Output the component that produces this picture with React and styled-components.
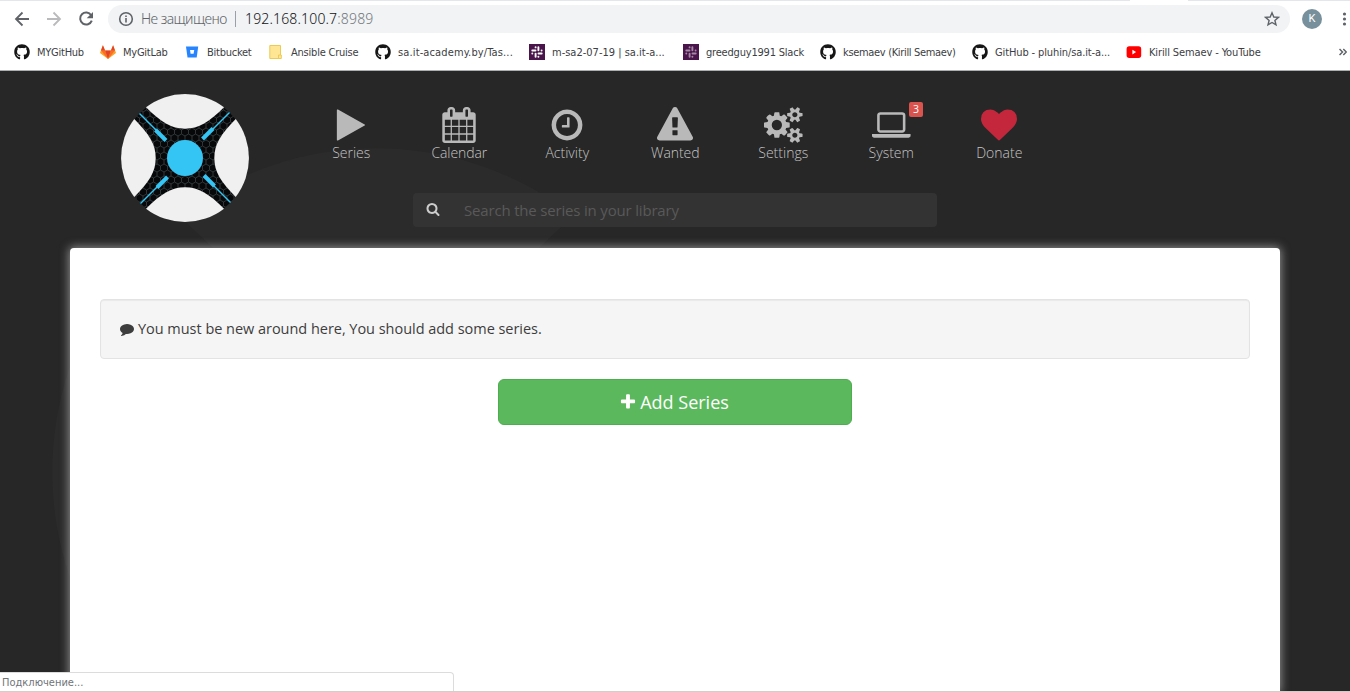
import React from "react";
import styled, { createGlobalStyle } from "styled-components";
import { FaGithub } from "react-icons/fa";

const Global = createGlobalStyle`
  * { box-sizing: border-box; }
  html, body { margin: 0; height: 100%; overflow: hidden; background: #272727; }
  #root { height: 100%; }
`;

const uiFont = `"DejaVu Sans Condensed", "DejaVu Sans", sans-serif`;
const siteFont = `"Open Sans", "Noto Sans", sans-serif`;

const Window = styled.div`
  display: flex;
  flex-direction: column;
  width: 1350px;
  height: 692px;
  overflow: hidden;
  position: relative;
`;

/* ---------- browser chrome ---------- */

const Chrome = styled.header`
  flex: none;
  height: 71px;
  background: #fff;
  border-bottom: 1px solid #abafb0;
  font-family: ${uiFont};
`;

const TabEdge = styled.div`
  height: 1px;
  background: linear-gradient(90deg, #e3e7eb 1130px, #fff 1130px, #fff 1188px, #e3e7eb 1188px);
`;

const Toolbar = styled.div`
  display: flex;
  align-items: center;
  height: 36px;
  padding-left: 12px;
`;

const ToolButton = styled.span`
  display: flex;
  align-items: center;
  justify-content: center;
  flex: none;
  width: 20px;
  height: 20px;
  margin-right: 12px;
  color: ${(p) => (p.$muted ? "#bababc" : "#5f6368")};
`;

const Omnibox = styled.div`
  display: flex;
  align-items: center;
  width: 1182px;
  height: 28px;
  padding: 0 10px;
  border-radius: 14px;
  background: #f1f3f4;
  color: #5f6368;
`;

const Security = styled.span`
  margin-left: 7px;
  width: 87px;
  font: 300 14px/20px "Noto Sans", sans-serif;
  letter-spacing: -0.55px;
  white-space: nowrap;
`;

const Divider = styled.i`
  width: 1px;
  height: 16px;
  margin: 0 9px 0 7px;
  background: #9aa0a6;
`;

const Address = styled.span`
  flex: 1;
  font: 300 14px/20px "Noto Sans", sans-serif;
  color: #101114;
  white-space: nowrap;
  letter-spacing: 0.16px;
`;

const Port = styled.span`
  color: #72777d;
`;

const Avatar = styled.span`
  display: flex;
  align-items: center;
  justify-content: center;
  width: 20px;
  height: 20px;
  margin: 0 20px 0 12px;
  border-radius: 50%;
  background: #78909c;
  color: #fff;
  font: 11px/20px Roboto, sans-serif;
`;

const Bookmarks = styled.nav`
  display: flex;
  align-items: center;
  height: 30px;
  padding-left: 14px;
  color: #3c4043;
`;

const Bookmark = styled.span`
  display: flex;
  align-items: center;
  flex: none;
  gap: 7px;
  width: ${(p) => p.$width}px;
  font-size: 11px;
  line-height: 16px;
  white-space: nowrap;
  letter-spacing: ${(p) => p.$track || 0}px;
  svg { flex: none; }
`;

const BookmarkText = styled.span`
  padding-top: 1px;
`;

const More = styled.span`
  display: flex;
  margin-left: auto;
  margin-right: 3px;
`;

/* ---------- page ---------- */

const Page = styled.main`
  position: relative;
  flex: 1;
  min-height: 0;
  overflow: hidden;
  background: #272727;
  font-family: ${siteFont};
`;

const Watermark = styled.svg`
  position: absolute;
  left: 52px;
  top: 77px;
`;

const Container = styled.div`
  position: relative;
  display: flex;
  flex-direction: column;
  width: 1210px;
  height: 100%;
  margin: 0 auto;
`;

const Header = styled.div`
  display: flex;
  flex: none;
  height: 177px;
  padding: 23px 0 0 51px;
`;

const HeaderBody = styled.div`
  margin-left: 48px;
`;

const Menu = styled.nav`
  display: flex;
  height: 99px;
  padding-top: 12px;
`;

const MenuItem = styled.a`
  position: relative;
  display: flex;
  flex-direction: column;
  align-items: center;
  width: 108px;
  padding: 0.5px 0 0 0.5px;
  color: ${(p) => (p.$heart ? "#c4273c" : "#b9b9b9")};
`;

const MenuLabel = styled.span`
  margin-top: 0.5px;
  font-size: 14px;
  line-height: 20px;
  font-weight: 300;
  color: #c4c4c4;
  letter-spacing: ${(p) => p.$track || 0}px;
`;

const Badge = styled.span`
  position: absolute;
  left: 72px;
  top: -4px;
  width: 14px;
  height: 15px;
  border-radius: 2px;
  background: #d9534f;
  color: #fff;
  font-size: 10.5px;
  line-height: 15px;
  text-align: center;
`;

const Search = styled.div`
  display: flex;
  align-items: center;
  width: 524px;
  height: 34px;
  margin-left: 116px;
  padding-left: 12.5px;
  border-radius: 4px;
  background: #333;
  color: #ccc;
  > svg { margin-bottom: 2px; }
`;

const Placeholder = styled.span`
  margin-left: 24.5px;
  font-size: 15px;
  line-height: 20px;
  letter-spacing: -0.18px;
  color: #595959;
`;

const Panel = styled.section`
  flex: 1;
  padding: 51px 30px 0;
  border-radius: 4px 4px 0 0;
  background: #fff;
  box-shadow: 0 0 10px 1px rgba(245, 242, 243, 0.52);
`;

const Well = styled.div`
  display: flex;
  align-items: center;
  height: 60px;
  padding: 0 19px 1px;
  border: 1px solid #e3e3e3;
  border-radius: 4px;
  background: #f5f5f5;
  box-shadow: inset 0 1px 1px rgba(0, 0, 0, 0.05);
  color: #3d3d3d;
  font-size: 14.5px;
  line-height: 20px;
`;

const WellText = styled.span`
  margin-left: 4px;
  letter-spacing: -0.03px;
`;

const AddButton = styled.button`
  display: flex;
  align-items: center;
  justify-content: center;
  gap: 3px;
  width: 354px;
  height: 46px;
  margin: 20px auto 0;
  padding: 0 2px 0 0;
  border: 1px solid #4cae4c;
  border-radius: 6px;
  background: #5cb85c;
  color: #fff;
  font: 18px/24px ${siteFont};
`;

const Status = styled.div`
  position: absolute;
  left: 0;
  bottom: 1px;
  width: 454px;
  height: 19px;
  padding-left: 2px;
  border: solid #dcdcdc;
  border-width: 1px 1px 0 0;
  border-radius: 0 4px 0 0;
  background: #fff;
  color: #70757a;
  font: 11px/19px ${uiFont};
`;

const BottomEdge = styled.div`
  position: absolute;
  left: 0;
  right: 0;
  bottom: 0;
  height: 1px;
  background: #cfd0c8;
`;

/* ---------- drawings ---------- */

const glyphs = {
  play: "M1576 927l-1328 738q-23 13-39.5 3t-16.5-36v-1472q0-26 16.5-36t39.5 3l1328 738q23 13 23 31t-23 31z",
  calendar:
    "M192 1664h288v-288h-288v288zm352 0h320v-288h-320v288zm-352-352h288v-320h-288v320zm352 0h320v-320h-320v320zm-352-384h288v-288h-288v288zm736 736h320v-288h-320v288zm-384-736h320v-288h-320v288zm768 736h288v-288h-288v288zm-384-352h320v-320h-320v320zm-352-864v-288q0-13-9.5-22.5t-22.5-9.5h-64q-13 0-22.5 9.5t-9.5 22.5v288q0 13 9.5 22.5t22.5 9.5h64q13 0 22.5-9.5t9.5-22.5zm736 864h288v-320h-288v320zm-384-384h320v-288h-320v288zm384 0h288v-288h-288v288zm32-480v-288q0-13-9.5-22.5t-22.5-9.5h-64q-13 0-22.5 9.5t-9.5 22.5v288q0 13 9.5 22.5t22.5 9.5h64q13 0 22.5-9.5t9.5-22.5zm384-64v1280q0 52-38 90t-90 38h-1408q-52 0-90-38t-38-90v-1280q0-52 38-90t90-38h128v-96q0-66 47-113t113-47h64q66 0 113 47t47 113v96h384v-96q0-66 47-113t113-47h64q66 0 113 47t47 113v96h128q52 0 90 38t38 90z",
  clock:
    "M1024 544v448q0 14-9 23t-23 9h-320q-14 0-23-9t-9-23v-64q0-14 9-23t23-9h224v-352q0-14 9-23t23-9h64q14 0 23 9t9 23zm416 352q0-148-73-273t-198-198-273-73-273 73-198 198-73 273 73 273 198 198 273 73 273-73 198-198 73-273zm224 0q0 209-103 385.5t-279.5 279.5-385.5 103-385.5-103-279.5-279.5-103-385.5 103-385.5 279.5-279.5 385.5-103 385.5 103 279.5 279.5 103 385.5z",
  warning:
    "M1024 1375v-190q0-14-9.5-23.5t-22.5-9.5h-192q-13 0-22.5 9.5t-9.5 23.5v190q0 14 9.5 23.5t22.5 9.5h192q13 0 22.5-9.5t9.5-23.5zm-2-374l18-459q0-12-10-19-13-11-24-11h-220q-11 0-24 11-10 7-10 21l17 457q0 10 10 16.5t24 6.5h185q14 0 23.5-6.5t10.5-16.5zm-14-934l768 1408q35 63-2 126-17 29-46.5 46t-63.5 17h-1536q-34 0-63.5-17t-46.5-46q-37-63-2-126l768-1408q17-31 47-49t65-18 65 18 47 49z",
  cogs:
    "M896 896q0-106-75-181t-181-75-181 75-75 181 75 181 181 75 181-75 75-181zm768 512q0-52-38-90t-90-38-90 38-38 90q0 53 37.5 90.5t90.5 37.5 90.5-37.5 37.5-90.5zm0-1024q0-52-38-90t-90-38-90 38-38 90q0 53 37.5 90.5t90.5 37.5 90.5-37.5 37.5-90.5zm-384 421v185q0 10-7 19.5t-16 10.5l-155 24q-11 35-32 76 34 48 90 115 7 11 7 20 0 12-7 19-23 30-82.5 89.5t-78.5 59.5q-11 0-21-7l-115-90q-37 19-77 31-11 108-23 155-7 24-30 24h-186q-11 0-20-7.5t-10-17.5l-23-153q-34-10-75-31l-118 89q-7 7-20 7-11 0-21-8-144-133-144-160 0-9 7-19 10-14 41-53t47-61q-23-44-35-82l-152-24q-10-1-17-9.5t-7-19.5v-185q0-10 7-19.5t16-10.5l155-24q11-35 32-76-34-48-90-115-7-11-7-20 0-12 7-20 22-30 82-89t79-59q11 0 21 7l115 90q34-18 77-32 11-108 23-154 7-24 30-24h186q11 0 20 7.5t10 17.5l23 153q34 10 75 31l118-89q8-7 20-7 11 0 21 8 144 133 144 160 0 8-7 19-12 16-42 54t-45 60q23 48 34 82l152 23q10 2 17 10.5t7 19.5zm640 533v140q0 16-149 31-12 27-30 52 51 113 51 138 0 4-4 7-122 71-124 71-8 0-46-47t-52-68q-20 2-30 2t-30-2q-14 21-52 68t-46 47q-2 0-124-71-4-3-4-7 0-25 51-138-18-25-30-52-149-15-149-31v-140q0-16 149-31 13-29 30-52-51-113-51-138 0-4 4-7 4-2 35-20t59-34 30-16q8 0 46 46.5t52 67.5q20-2 30-2t30 2q51-71 92-112l6-2q4 0 124 70 4 3 4 7 0 25-51 138 17 23 30 52 149 15 149 31zm0-1024v140q0 16-149 31-12 27-30 52 51 113 51 138 0 4-4 7-122 71-124 71-8 0-46-47t-52-68q-20 2-30 2t-30-2q-14 21-52 68t-46 47q-2 0-124-71-4-3-4-7 0-25 51-138-18-25-30-52-149-15-149-31v-140q0-16 149-31 13-29 30-52-51-113-51-138 0-4 4-7 4-2 35-20t59-34 30-16q8 0 46 46.5t52 67.5q20-2 30-2t30 2q51-71 92-112l6-2q4 0 124 70 4 3 4 7 0 25-51 138 17 23 30 52 149 15 149 31z",
  laptop:
    "M416 1280q-66 0-113-47t-47-113v-704q0-66 47-113t113-47h1088q66 0 113 47t47 113v704q0 66-47 113t-113 47h-1088zm-32-864v704q0 13 9.5 22.5t22.5 9.5h1088q13 0 22.5-9.5t9.5-22.5v-704q0-13-9.5-22.5t-22.5-9.5h-1088q-13 0-22.5 9.5t-9.5 22.5zm1376 928h160v96q0 40-47 68t-113 28h-1600q-66 0-113-28t-47-68v-96h1760z",
  heart:
    "M896 1664q-26 0-44-18l-624-602q-10-8-27.5-26t-55.5-65.5-68-97.5-53.5-121-23.5-138q0-220 127-344t351-124q62 0 126.5 21.5t120 58 95.5 68.5 76 68q36-36 76-68t95.5-68.5 120-58 126.5-21.5q224 0 351 124t127 344q0 221-229 450l-623 600q-18 18-44 18z",
  search:
    "M1216 832q0-185-131.5-316.5t-316.5-131.5-316.5 131.5-131.5 316.5 131.5 316.5 316.5 131.5 316.5-131.5 131.5-316.5zm512 832q0 52-38 90t-90 38q-54 0-90-38l-343-342q-179 124-399 124-143 0-273.5-55.5t-225-150-150-225-55.5-273.5 55.5-273.5 150-225 225-150 273.5-55.5 273.5 55.5 225 150 150 225 55.5 273.5q0 220-124 399l343 343q37 37 37 90z",
  comment:
    "M1792 896q0 174-120 321.5t-326 233-450 85.5q-70 0-145-8-198 175-460 242-49 14-114 22-17 2-30.5-9t-17.5-29v-1q-3-4-.5-12t2-10 4.5-9.5l6-9 7-8.5 8-9q7-8 31-34.5t34.5-38 31-39.5 32.5-51 27-59 26-76q-157-89-247.5-220t-90.5-281q0-130 71-248.5t191-204.5 286-136.5 348-50.5q244 0 450 85.5t326 233 120 321.5z",
  plus: "M1600 736v192q0 40-28 68t-68 28h-416v416q0 40-28 68t-68 28h-192q-40 0-68-28t-28-68v-416h-416q-40 0-68-28t-28-68v-192q0-40 28-68t68-28h416v-416q0-40 28-68t68-28h192q40 0 68 28t28 68v416h416q40 0 68 28t28 68z",
};

const Glyph = ({ name, size, wide }) => {
  const w = wide ? 1920 : 1792;
  return (
    <svg width={(size * w) / 1792} height={size} viewBox={`0 0 ${w} 1792`} fill="currentColor">
      <path d={glyphs[name]} />
    </svg>
  );
};

const petal = "M-39-50.7A64 64 0 0 1 39-50.7C24-36 14-29.3 0-29.3C-14-29.3-24-36-39-50.7Z";
const quarters = [0, 90, 180, 270];

const Logo = () => (
  <svg width="128" height="128" viewBox="-64 -64 128 128">
    <defs>
      <pattern id="hex" width="7" height="12" patternUnits="userSpaceOnUse">
        <rect width="7" height="12" fill="#060809" />
        <path d="M0 2L3.5 0L7 2M0 2V6L3.5 8L7 6V2M3.5 8V12" fill="none" stroke="#43484a" strokeWidth=".7" />
      </pattern>
    </defs>
    <circle r="63.6" fill="url(#hex)" />
    {quarters.map((a) => (
      <g key={a} transform={`rotate(${a})`}>
        <path d={petal} fill="#f0f0f0" />
        <path d="M-45.5-44.5L-27-26" stroke="#35c5f4" strokeWidth="1.4" />
        <path d="M-29.5-28L-19-17.5" stroke="#35c5f4" strokeWidth="4" />
      </g>
    ))}
    <circle r="18" fill="#35c5f4" />
  </svg>
);

const Slack = ({ faded }) => (
  <svg width="16" height="16" viewBox="0 0 16 16">
    <rect width="16" height="16" fill="#4a154b" />
    <g fill="none" stroke={faded ? "#a58aa6" : "#fff"} strokeWidth="1.9" strokeLinecap="round">
      <path d="M6.6 3.2V3.4M9.4 3.2V6.3M3.3 6.5H6.5M12.6 6.5V6.6M3.3 9.5V9.6M9.5 9.5H12.7M6.6 9.6V12.8M9.4 12.6V12.8" />
    </g>
  </svg>
);

const GitHub = () => <FaGithub size={16} color="#161616" />;

const GitLab = () => (
  <svg width="16" height="16" viewBox="0 0 16 16">
    <path d="M8 15L.3 9.2a.6.6 0 0 1-.2-.6L2.9 1.2L5.1 6.5H10.9L13.1 1.2L15.9 8.6a.6.6 0 0 1-.2.6Z" fill="#fca326" />
    <path d="M8 15L1 6.5H5.1ZM8 15L15 6.5H10.9Z" fill="#fc6d26" />
    <path d="M8 15L5.1 6.5H10.9ZM1 6.5L2.9 1.2L5.1 6.5ZM15 6.5L13.1 1.2L10.9 6.5Z" fill="#e24329" />
  </svg>
);

const Bitbucket = () => (
  <svg width="16" height="16" viewBox="0 0 16 16">
    <path d="M2 2.5h12.2L12.7 13.5h-9.2Z" fill="#2684ff" />
    <path d="M6 6h4.2l-.6 3.8H6.6Z" fill="#fff" />
  </svg>
);

const Note = () => (
  <svg width="16" height="16" viewBox="0 0 16 16">
    <path d="M1.8 1.5h10.7v9.5h.8v3.5H1.8Z" fill="#ffe694" stroke="#ecca54" />
    <path d="M10.5 14v-3h2" fill="none" stroke="#ecca54" />
  </svg>
);

const YouTube = () => (
  <svg width="16" height="16" viewBox="0 0 16 16">
    <rect x=".6" y="2.3" width="14.6" height="11.6" rx="2.6" fill="#f00" />
    <path d="M6.4 5.8v4.6L10.1 8.1Z" fill="#fff" />
  </svg>
);

const bookmarks = [
  { icon: <GitHub />, text: "MYGitHub", width: 86, track: -0.25 },
  { icon: <GitLab />, text: "MyGitLab", width: 84, track: -0.25 },
  { icon: <Bitbucket />, text: "Bitbucket", width: 84, track: -0.25 },
  { icon: <Note />, text: "Ansible Cruise", width: 107, track: -0.22 },
  { icon: <GitHub />, text: "sa.it-academy.by/Tas...", width: 154, track: 0.13 },
  { icon: <Slack />, text: "m-sa2-07-19 | sa.it-a...", width: 154 },
  { icon: <Slack faded />, text: "greedguy1991 Slack", width: 137, track: -0.2 },
  { icon: <GitHub />, text: "ksemaev (Kirill Semaev)", width: 152, track: -0.33 },
  { icon: <GitHub />, text: "GitHub - pluhin/sa.it-a...", width: 154, track: -0.12 },
  { icon: <YouTube />, text: "Kirill Semaev - YouTube", width: 140, track: -0.12 },
];

const menu = [
  { glyph: "play", text: "Series" },
  { glyph: "calendar", text: "Calendar", track: -0.1 },
  { glyph: "clock", text: "Activity" },
  { glyph: "warning", text: "Wanted", track: -0.1 },
  { glyph: "cogs", text: "Settings", wide: true },
  { glyph: "laptop", text: "System", wide: true, badge: "3" },
  { glyph: "heart", text: "Donate", heart: true },
];

export default function App() {
  return (
    <Window>
      <Global />
      <Chrome>
        <TabEdge />
        <Toolbar>
          <ToolButton>
            <svg width="20" height="20" viewBox="0 0 20 20" fill="none" stroke="currentColor" strokeWidth="1.8">
              <path d="M17 10H4.5M10.5 3.5L4 10L10.5 16.5" />
            </svg>
          </ToolButton>
          <ToolButton $muted>
            <svg width="20" height="20" viewBox="0 0 20 20" fill="none" stroke="currentColor" strokeWidth="1.8">
              <path d="M3 10H15.5M9.5 3.5L16 10L9.5 16.5" />
            </svg>
          </ToolButton>
          <ToolButton>
            <svg width="20" height="20" viewBox="0 0 20 20" fill="none" stroke="currentColor" strokeWidth="2">
              <path d="M15.2 6.2A6 6 0 1 0 15.8 11.6" />
              <path d="M17 3v6.3h-6.3Z" fill="currentColor" stroke="none" />
            </svg>
          </ToolButton>
          <Omnibox>
            <svg width="16" height="16" viewBox="0 0 16 16" fill="none" stroke="currentColor" strokeWidth="1.6">
              <circle cx="8" cy="8" r="6.3" />
              <path d="M8 7v4.4M8 4.4v1.7" />
            </svg>
            <Security>Не защищено</Security>
            <Divider />
            <Address>
              192.168.100.7<Port>:8989</Port>
            </Address>
            <svg width="16" height="16" viewBox="0 0 16 16" fill="none" stroke="currentColor" strokeWidth="1.4">
              <path d="M8 1.8L9.8 6L14.4 6.4L10.9 9.4L12 13.9L8 11.5L4 13.9L5.1 9.4L1.6 6.4L6.2 6Z" />
            </svg>
          </Omnibox>
          <Avatar>K</Avatar>
          <svg width="5" height="16" viewBox="0 0 5 16" fill="#5f6368">
            <circle cx="2.5" cy="3" r="1.6" />
            <circle cx="2.5" cy="8" r="1.6" />
            <circle cx="2.5" cy="13" r="1.6" />
          </svg>
        </Toolbar>
        <Bookmarks>
          {bookmarks.map((b) => (
            <Bookmark key={b.text} $width={b.width} $track={b.track}>
              {b.icon}
              <BookmarkText>{b.text}</BookmarkText>
            </Bookmark>
          ))}
          <More>
            <svg width="8" height="8" viewBox="0 0 8 8" fill="none" stroke="#5f6368" strokeWidth="1.5">
              <path d="M.5 1L3.5 4L.5 7M4.3 1L7.3 4L4.3 7" />
            </svg>
          </More>
        </Bookmarks>
      </Chrome>
      <Page>
        <Watermark width="648" height="648" viewBox="-64 -64 128 128">
          {quarters.map((a) => (
            <path key={a} d={petal} transform={`rotate(${a})`} fill="#2b2b2b" />
          ))}
        </Watermark>
        <Container>
          <Header>
            <Logo />
            <HeaderBody>
              <Menu>
                {menu.map((m) => (
                  <MenuItem key={m.text} $heart={m.heart}>
                    <Glyph name={m.glyph} size={36} wide={m.wide} />
                    <MenuLabel $track={m.track}>{m.text}</MenuLabel>
                    {m.badge && <Badge>{m.badge}</Badge>}
                  </MenuItem>
                ))}
              </Menu>
              <Search>
                <Glyph name="search" size={14} />
                <Placeholder>Search the series in your library</Placeholder>
              </Search>
            </HeaderBody>
          </Header>
          <Panel>
            <Well>
              <Glyph name="comment" size={14} />
              <WellText>You must be new around here, You should add some series.</WellText>
            </Well>
            <AddButton>
              <Glyph name="plus" size={18} />
              Add Series
            </AddButton>
          </Panel>
        </Container>
      </Page>
      <Status>Подключение...</Status>
      <BottomEdge />
    </Window>
  );
}
